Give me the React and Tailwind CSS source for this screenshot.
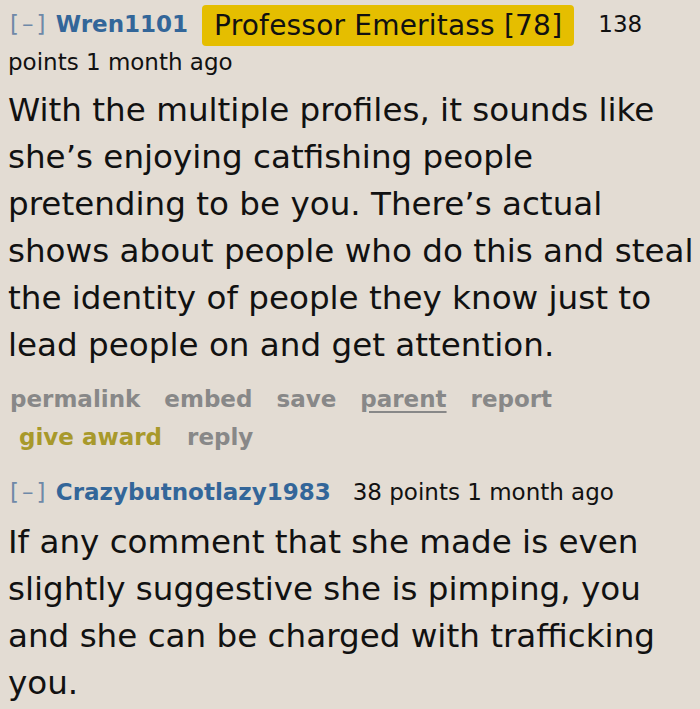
import React from 'react';

const verdana = { fontFamily: '"DejaVu Sans", Verdana, sans-serif' };

function Comment({ user, flair, meta, lines, bodyTop, children }) {
  return (
    <div className="px-2">
      <div className="text-[23px] leading-[37px] text-[#111]" style={verdana}>
        <span className="text-[#6f89a8] tracking-[3px] pl-[2px]">[–]</span>{' '}
        <span className="font-bold text-[#336699]">{user}</span>
        {flair}
        {meta}
      </div>
      <div className={`${bodyTop} text-[32.6px] leading-[47px] text-[#111] whitespace-nowrap`}>
        {lines.map((l, i) => (
          <div key={i}>{l}</div>
        ))}
      </div>
      {children}
    </div>
  );
}

export default function App() {
  return (
    <div className="w-[700px] h-[709px] overflow-hidden bg-[#e3dcd3]" style={verdana}>
      <div className="pt-[6px]">
        <Comment
          user="Wren1101"
          bodyTop="mt-[6px]"
          flair={
            <span className="inline-block ml-[14px] mr-[24px] -my-[2px] px-[12px] rounded-[4px] bg-[#e5be00] text-[28px] tracking-[0.2px] leading-[41px] align-middle text-[#111]">
              Professor Emeritass [78]
            </span>
          }
          meta={
            <>
              <span>138</span>
              <br />
              <span>points 1 month ago</span>
            </>
          }
          lines={[
            'With the multiple profiles, it sounds like',
            'she’s enjoying catfishing people',
            'pretending to be you. There’s actual',
            'shows about people who do this and steal',
            'the identity of people they know just to',
            'lead people on and get attention.',
          ]}
        >
          <div className="mt-[11px] text-[23px] font-bold text-[#888] leading-[38px]">
            <div className="flex gap-[24px] pl-[2px]">
              <span>permalink</span>
              <span>embed</span>
              <span>save</span>
              <span className="underline underline-offset-4">parent</span>
              <span>report</span>
            </div>
            <div className="flex gap-[25px] pl-[11px]">
              <span className="text-[#a8992b]">give award</span>
              <span>reply</span>
            </div>
          </div>
        </Comment>
        <div className="mt-[18px]">
          <Comment
            user="Crazybutnotlazy1983"
            bodyTop="mt-[8px]"
            meta={<span className="ml-[22px]">38 points 1 month ago</span>}
            lines={[
              'If any comment that she made is even',
              'slightly suggestive she is pimping, you',
              'and she can be charged with trafficking',
              'you.',
            ]}
          />
        </div>
      </div>
    </div>
  );
}
